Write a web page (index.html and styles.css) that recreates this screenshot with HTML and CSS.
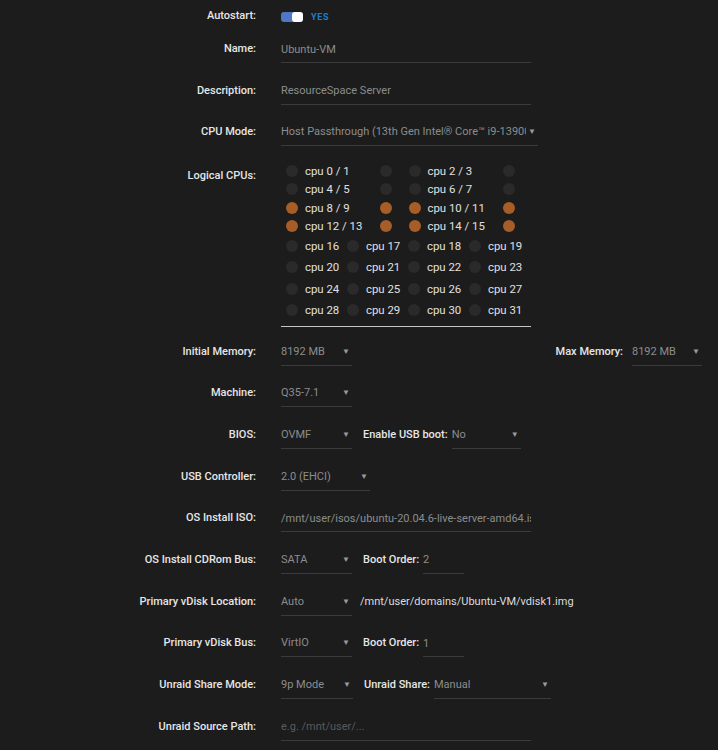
FILE: index.html
```html
<!DOCTYPE html>
<html lang="en">

<head>
    <meta charset="UTF-8">
    <meta name="viewport" content="width=device-width, initial-scale=1.0">
    <title>VM Settings</title>
    <link rel="stylesheet" href="styles.css">
</head>

<body>
    <div class="form">
        <div class="row row-auto">
            <div class="label">Autostart:</div>
            <div class="field">
                <span class="switch"><span class="knob"></span></span>
                <span class="switch-text">YES</span>
            </div>
        </div>

        <div class="row">
            <div class="label">Name:</div>
            <div class="field"><input class="text w250" type="text" value="Ubuntu-VM"></div>
        </div>

        <div class="row">
            <div class="label">Description:</div>
            <div class="field"><input class="text w250" type="text" value="ResourceSpace Server"></div>
        </div>

        <div class="row">
            <div class="label">CPU Mode:</div>
            <div class="field">
                <div class="select w257"><span class="val">Host Passthrough (13th Gen Intel® Core™ i9-13900K)</span><span class="caret">▼</span></div>
            </div>
        </div>

        <div class="row row-cpu">
            <div class="label">Logical CPUs:</div>
            <div class="field">
                <div class="cpus">
                    <div class="pair-row">
                        <div class="half"><span class="dot"></span><span class="cpu-name">cpu 0 / 1</span><span class="dot"></span></div>
                        <div class="half"><span class="dot"></span><span class="cpu-name">cpu 2 / 3</span><span class="dot"></span></div>
                    </div>
                    <div class="pair-row">
                        <div class="half"><span class="dot"></span><span class="cpu-name">cpu 4 / 5</span><span class="dot"></span></div>
                        <div class="half"><span class="dot"></span><span class="cpu-name">cpu 6 / 7</span><span class="dot"></span></div>
                    </div>
                    <div class="pair-row">
                        <div class="half"><span class="dot on"></span><span class="cpu-name">cpu 8 / 9</span><span class="dot on"></span></div>
                        <div class="half"><span class="dot on"></span><span class="cpu-name">cpu 10 / 11</span><span class="dot on"></span></div>
                    </div>
                    <div class="pair-row">
                        <div class="half"><span class="dot on"></span><span class="cpu-name">cpu 12 / 13</span><span class="dot on"></span></div>
                        <div class="half"><span class="dot on"></span><span class="cpu-name">cpu 14 / 15</span><span class="dot on"></span></div>
                    </div>
                    <div class="single-row">
                        <div class="cell"><span class="dot"></span><span class="cpu-name">cpu 16</span></div>
                        <div class="cell"><span class="dot"></span><span class="cpu-name">cpu 17</span></div>
                        <div class="cell"><span class="dot"></span><span class="cpu-name">cpu 18</span></div>
                        <div class="cell"><span class="dot"></span><span class="cpu-name">cpu 19</span></div>
                    </div>
                    <div class="single-row">
                        <div class="cell"><span class="dot"></span><span class="cpu-name">cpu 20</span></div>
                        <div class="cell"><span class="dot"></span><span class="cpu-name">cpu 21</span></div>
                        <div class="cell"><span class="dot"></span><span class="cpu-name">cpu 22</span></div>
                        <div class="cell"><span class="dot"></span><span class="cpu-name">cpu 23</span></div>
                    </div>
                    <div class="single-row">
                        <div class="cell"><span class="dot"></span><span class="cpu-name">cpu 24</span></div>
                        <div class="cell"><span class="dot"></span><span class="cpu-name">cpu 25</span></div>
                        <div class="cell"><span class="dot"></span><span class="cpu-name">cpu 26</span></div>
                        <div class="cell"><span class="dot"></span><span class="cpu-name">cpu 27</span></div>
                    </div>
                    <div class="single-row">
                        <div class="cell"><span class="dot"></span><span class="cpu-name">cpu 28</span></div>
                        <div class="cell"><span class="dot"></span><span class="cpu-name">cpu 29</span></div>
                        <div class="cell"><span class="dot"></span><span class="cpu-name">cpu 30</span></div>
                        <div class="cell"><span class="dot"></span><span class="cpu-name">cpu 31</span></div>
                    </div>
                </div>
            </div>
        </div>

        <div class="row">
            <div class="label">Initial Memory:</div>
            <div class="field grow">
                <div class="select w71"><span class="val">8192 MB</span><span class="caret">▼</span></div>
                <span class="sub-label push">Max Memory:</span>
                <div class="select w70"><span class="val">8192 MB</span><span class="caret">▼</span></div>
            </div>
        </div>

        <div class="row">
            <div class="label">Machine:</div>
            <div class="field">
                <div class="select w71"><span class="val">Q35-7.1</span><span class="caret">▼</span></div>
            </div>
        </div>

        <div class="row">
            <div class="label">BIOS:</div>
            <div class="field">
                <div class="select w71"><span class="val">OVMF</span><span class="caret">▼</span></div>
                <span class="sub-label">Enable USB boot:</span>
                <div class="select w69"><span class="val">No</span><span class="caret">▼</span></div>
            </div>
        </div>

        <div class="row">
            <div class="label">USB Controller:</div>
            <div class="field">
                <div class="select w89"><span class="val">2.0 (EHCI)</span><span class="caret">▼</span></div>
            </div>
        </div>

        <div class="row">
            <div class="label">OS Install ISO:</div>
            <div class="field"><input class="text w250" type="text" value="/mnt/user/isos/ubuntu-20.04.6-live-server-amd64.iso"></div>
        </div>

        <div class="row">
            <div class="label">OS Install CDRom Bus:</div>
            <div class="field">
                <div class="select w71"><span class="val">SATA</span><span class="caret">▼</span></div>
                <span class="sub-label">Boot Order:</span>
                <input class="text w41" type="text" value="2">
            </div>
        </div>

        <div class="row">
            <div class="label">Primary vDisk Location:</div>
            <div class="field">
                <div class="select w71"><span class="val">Auto</span><span class="caret">▼</span></div>
                <span class="path">/mnt/user/domains/Ubuntu-VM/vdisk1.img</span>
            </div>
        </div>

        <div class="row">
            <div class="label">Primary vDisk Bus:</div>
            <div class="field">
                <div class="select w71"><span class="val">VirtIO</span><span class="caret">▼</span></div>
                <span class="sub-label">Boot Order:</span>
                <input class="text w41" type="text" value="1">
            </div>
        </div>

        <div class="row">
            <div class="label">Unraid Share Mode:</div>
            <div class="field">
                <div class="select w72"><span class="val">9p Mode</span><span class="caret">▼</span></div>
                <span class="sub-label">Unraid Share:</span>
                <div class="select w117"><span class="val">Manual</span><span class="caret">▼</span></div>
            </div>
        </div>

        <div class="row">
            <div class="label">Unraid Source Path:</div>
            <div class="field"><input class="text w250" type="text" placeholder="e.g. /mnt/user/..."></div>
        </div>
    </div>
</body>

</html>
```

FILE: styles.css
```css
* {
    box-sizing: border-box;
}

body {
    margin: 0;
    background-color: #1c1c1c;
    font-family: "Roboto", "Liberation Sans", sans-serif;
    font-size: 11px;
    color: #dcdcdc;
    height: 750px;
    overflow: hidden;
}

.form {
    padding-top: 4px;
}

.row {
    display: flex;
    height: 41.67px;
}

.row-auto {
    height: 33px;
}

.label {
    flex: none;
    width: 256px;
    text-align: right;
    padding-top: 4px;
    line-height: 16px;
    color: #e6e6e6;
    font-weight: 500;
}

.field {
    margin-left: 25px;
    display: flex;
    align-items: flex-start;
}

.field.grow {
    flex: 1;
    padding-right: 16px;
}

/* autostart switch */
.switch {
    margin-top: 8px;
    width: 22px;
    height: 10px;
    border-radius: 3px;
    background-color: #5077c5;
    display: flex;
    justify-content: flex-end;
}

.knob {
    width: 11px;
    height: 10px;
    border-radius: 3px;
    background-color: #fff;
}

.switch-text {
    margin-left: 8px;
    margin-top: 8px;
    line-height: 11px;
    font-size: 9px;
    font-weight: bold;
    letter-spacing: 0.7px;
    color: #1f80c8;
}

/* text inputs */
.text {
    height: 26px;
    padding: 4px 0 5px;
    border: 0;
    border-bottom: 1px solid #3b3b3b;
    background: transparent;
    font-family: inherit;
    font-size: 11px;
    line-height: 16px;
    color: #8c8c8c;
    outline: none;
}

.text::placeholder {
    color: #5a5a5a;
}

/* select boxes */
.select {
    height: 26px;
    padding: 4px 2px 0 0;
    line-height: 16px;
    border-bottom: 1px solid #3b3b3b;
    color: #8c8c8c;
    display: flex;
    white-space: nowrap;
}

.select .val {
    flex: 1;
    overflow: hidden;
}

.caret {
    flex: none;
    font-size: 8px;
    color: #9a9a9a;
    padding-left: 2px;
}

.w250 { width: 250px; }
.w257 { width: 257px; }
.w117 { width: 117px; }
.w89 { width: 89px; }
.w72 { width: 72px; }
.w71 { width: 71px; }
.w70 { width: 70px; }
.w69 { width: 69px; }
.w41 { width: 41px; }

.sub-label {
    margin-left: 11px;
    margin-right: 4px;
    padding-top: 4px;
    line-height: 16px;
    color: #e6e6e6;
    font-weight: 500;
}

.sub-label.push {
    margin-left: auto;
    margin-right: 9px;
}

.path {
    margin-left: 8px;
    padding-top: 4px;
    line-height: 16px;
    color: #dcdcdc;
}

/* logical cpus */
.row-cpu {
    height: auto;
    padding-bottom: 13px;
}

.row-cpu .label {
    padding-top: 6px;
}

.cpus {
    width: 250px;
    padding-left: 5px;
    padding-bottom: 5px;
    border-bottom: 1px solid #c4c4c4;
}

.pair-row {
    display: flex;
    height: 18.33px;
    align-items: center;
}

.single-row {
    display: flex;
    height: 21.33px;
    align-items: center;
}

.half {
    width: 124px;
    display: flex;
    align-items: center;
}

.cell {
    width: 61px;
    display: flex;
    align-items: center;
}

.dot {
    flex: none;
    width: 12px;
    height: 12px;
    border-radius: 50%;
    background-color: #2a2a2a;
}

.dot.on {
    background-color: #a65d27;
}

.cpu-name {
    margin-left: 7px;
    font-size: 11.4px;
    color: #e0e0e0;
}

.half .cpu-name {
    width: 75px;
}
```
